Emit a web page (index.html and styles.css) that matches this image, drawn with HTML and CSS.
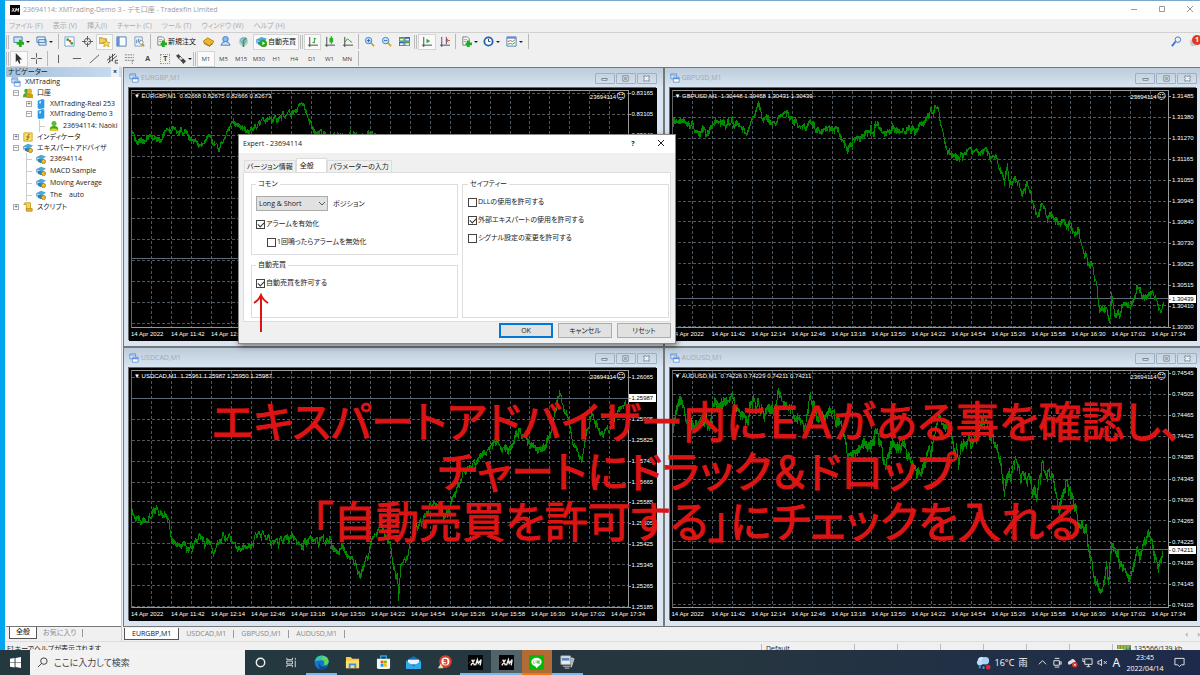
FILE: index.html
```html
<!DOCTYPE html>
<html lang="ja">
<head>
  <meta charset="UTF-8">
  <title>23694114: XMTrading-Demo 3 - デモ口座</title>
  <link rel="stylesheet" href="styles.css">
</head>
<body>

  <svg class="defs" aria-hidden="true">
    <symbol id="i-windows" viewBox="0 0 12 12"><path d="M1 1h7v6H1z" fill="#dcebfb" stroke="#5a93d8"/><path d="M1 2.500h7" stroke="#5a93d8"/><path d="M4 5h7v6H4z" fill="#fff" stroke="#5a93d8"/><path d="M4 6.500h7" stroke="#5a93d8" stroke-width="2"/></symbol>
    <symbol id="i-server" viewBox="0 0 12 12"><path d="M2 2l6-2 2 1v10l-6 1-2-1z" fill="#2a9be8"/><path d="M4 3l2-1v3L4 5.500z" fill="#d6efff"/></symbol>
    <symbol id="i-accounts" viewBox="0 0 12 12"><circle cx="4" cy="3.500" r="2.500" fill="#3fae2a"/><path d="M0 11q0-5 4-5t4 5z" fill="#3fae2a"/><circle cx="8" cy="3.500" r="3" fill="#e2b52c"/><path d="M4 12V8q1-2 4-2t4 2v4z" fill="#d19a17"/></symbol>
    <symbol id="i-user" viewBox="0 0 12 12"><circle cx="6" cy="3" r="3" fill="#5cbc2c"/><path d="M1 10q0-4 5-4t5 4v1H1z" fill="#3aa51e"/><path d="M1 12q0-3 3-3h3q4 0 4 3z" fill="#f2c832"/></symbol>
    <symbol id="i-indi" viewBox="0 0 12 12"><path d="M1 1h10v10H1z" fill="#f7df68" stroke="#c9a020"/><path d="M8 3q-2-1-2 2v3q0 2-2 1M4 6h4" fill="none" stroke="#7c5d08"/></symbol>
    <symbol id="i-hat" viewBox="0 0 12 12"><path d="M2 6v3l4 2 3-2V6z" fill="#2c7fae"/><path d="M0 4l6-3 6 2-5 4z" fill="#49a9d8"/><path d="M1 4v4" stroke="#23719d"/><circle cx="9" cy="9" r="2.500" fill="#edbd2c" stroke="#a77c10"/></symbol>
    <symbol id="i-script" viewBox="0 0 12 12"><path d="M2 1h7v8H4V3H1z" fill="#f6d65b" stroke="#c4961a"/><path d="M4 8h7v3H4z" fill="#e9b92d" stroke="#b88912"/></symbol>
    <symbol id="i-sheetplus" viewBox="0 0 12 12"><path d="M2 1h5l2 2v7H2z" fill="#fff" stroke="#777"/><path d="M3 4h4M3 6h3" stroke="#999"/><path d="M8 5v7M5 8.500h7" stroke="#1fae1f" stroke-width="3"/></symbol>
    <symbol id="i-xm" viewBox="0 0 16 16"><path d="M0 0h16v16H0z" fill="#050505"/><path d="M3 11l4-6M4 5l3 6M8 11l2-6 1 4 3-4-1 6" fill="none" stroke="#eee" stroke-width="1.500"/><path d="M1 9l2-2" stroke="#d22"/></symbol>
  </svg>

  <div class="app">
    <header class="titlebar">
      <svg class="app-icon"><use href="#i-xm"/></svg>
      <span class="title">23694114: XMTrading-Demo 3 - デモ口座 - Tradexfin Limited</span>
      <div class="caption">
        <button aria-label="最小化"><svg viewBox="0 0 8 8"><path d="M1 4.500h6"/></svg></button>
        <button aria-label="最大化"><svg viewBox="0 0 8 8"><path d="M1.500 1.500h5v5h-5z"/></svg></button>
        <button aria-label="閉じる"><svg viewBox="0 0 8 8"><path d="M1 1l6 6M7 1L1 7"/></svg></button>
      </div>
    </header>

    <nav class="menu">
      <button>ファイル (F)</button><button>表示 (V)</button><button>挿入(I)</button><button>チャート (C)</button><button>ツール (T)</button><button>ウィンドウ (W)</button><button>ヘルプ (H)</button>
    </nav>

    <div class="toolbars">
      <div class="toolbar">
        <i class="grip"></i>
        <div class="group w-new">
          <button class="drop" aria-label="新規チャート"><svg viewBox="0 0 12 12"><path d="M1 1h9v6H1z" fill="#cfe3f8" stroke="#4779b5"/><path d="M8 4v8M4 8h8" stroke="#1fae1f" stroke-width="3"/></svg></button>
          <button class="drop" aria-label="定型"><svg viewBox="0 0 12 12"><path d="M1 1h9v6H1zM3 4h8v6H3z" fill="#e4effb" stroke="#4779b5"/></svg></button>
        </div>
        <i class="sep"></i>
        <div class="group w-5">
          <button aria-label="気配値"><svg viewBox="0 0 12 12"><path d="M1 1h10v10H1z" fill="#fff" stroke="#6f9fd0"/><circle cx="4" cy="4" r="1.500" fill="#2a2"/><circle cx="6.500" cy="5.500" r="1.500" fill="#e44"/><circle cx="8.500" cy="8" r="1.500" fill="#2a2"/></svg></button>
          <button aria-label="データ"><svg viewBox="0 0 12 12" fill="none" stroke="#555"><circle cx="6" cy="6" r="3.500"/><path d="M6 0v5M6 7v5M0 6h5M7 6h5"/></svg></button>
          <button class="on" aria-label="ナビゲーター"><svg viewBox="0 0 12 12"><path d="M0 2h4l1 1h3v5H0z" fill="#f3cf60" stroke="#b8912a"/><path d="M8 4l1 3h3l-2 2 1 3-3-2-3 2 1-3-2-2h3z" fill="#ffe24d" stroke="#b98d10" stroke-width=".7"/></svg></button>
          <button aria-label="ターミナル"><svg viewBox="0 0 12 12"><path d="M1 1h10v10H1z" fill="#fff" stroke="#4779b5"/><path d="M1 1h3v10H1z" fill="#5b94d8"/></svg></button>
          <button aria-label="テスター"><svg viewBox="0 0 12 12"><path d="M1 1h8v10H1z" fill="#eef4fb" stroke="#7a9cc0"/><path d="M3 4v4M5 3v4M7 4v4" stroke="#4779b5"/><circle cx="8" cy="7" r="2" fill="#fff" stroke="#888"/><path d="M9 9l2 2" stroke="#c90" stroke-width="2"/></svg></button>
        </div>
        <i class="sep"></i>
        <button class="text-btn"><svg><use href="#i-sheetplus"/></svg>新規注文</button>
        <div class="group w-3">
          <button aria-label="メタエディター"><svg viewBox="0 0 12 12"><path d="M0 6l5-4 7 4-5 5z" fill="#f0b62b" stroke="#b77d0b"/><path d="M1 8l6 3 4-3" fill="none" stroke="#8f6208"/></svg></button>
          <button aria-label="コミュニティ"><svg viewBox="0 0 12 12"><circle cx="6" cy="3.500" r="3" fill="#8bbcf0" stroke="#4179c2"/><path d="M1 10q1-4 5-4t5 4z" fill="#cfe3fa" stroke="#4179c2"/></svg></button>
          <button aria-label="シグナル"><svg viewBox="0 0 12 12"><circle cx="6" cy="6" r="5" fill="#b9d0dd"/><path d="M6 12V5l3-3" stroke="#35a83a" stroke-width="2" fill="none"/><circle cx="6" cy="5" r="3" fill="none" stroke="#5b98c0"/></svg></button>
        </div>
        <button class="text-btn on"><svg viewBox="0 0 12 12"><use href="#i-hat"/><circle cx="8" cy="8" r="4" fill="#26a526"/><path d="M7 6v4l3-2z" fill="#fff"/></svg>自動売買</button>
        <i class="grip"></i>
        <div class="group w-3">
          <button class="on" aria-label="バーチャート"><svg viewBox="0 0 12 12" fill="none"><path d="M3 1v11M1 10h11" stroke="#444"/><path d="M8 2v6M8 3h2M6 7h2" stroke="#1a9e1a"/></svg></button>
          <button aria-label="ローソク足"><svg viewBox="0 0 12 12"><path d="M3 1v11M1 10h11" stroke="#444"/><path d="M8 0v9" stroke="#1a9e1a"/><path d="M6 2h4v5H6z" fill="#1fb81f"/></svg></button>
          <button aria-label="ライン"><svg viewBox="0 0 12 12" fill="none"><path d="M3 1v11M1 10h11" stroke="#444"/><path d="M3 7q3-6 5-2l3 2" stroke="#1a9e1a"/></svg></button>
        </div>
        <i class="sep"></i>
        <div class="group w-3">
          <button aria-label="拡大"><svg viewBox="0 0 12 12"><path d="M7 7l4 4" stroke="#d8a521" stroke-width="2"/><circle cx="5" cy="5" r="3.500" fill="#cfe6fb" stroke="#3a7cc9"/><path d="M3 5h4M5 3v4" stroke="#2466b0"/></svg></button>
          <button aria-label="縮小"><svg viewBox="0 0 12 12"><path d="M7 7l4 4" stroke="#d8a521" stroke-width="2"/><circle cx="5" cy="5" r="3.500" fill="#cfe6fb" stroke="#3a7cc9"/><path d="M3 5h4" stroke="#2466b0"/></svg></button>
          <button aria-label="整列"><svg viewBox="0 0 12 12"><path d="M0 1h6v5H0zM6 6h6v5H6z" fill="#4aa32a"/><path d="M6 1h6v5H6zM0 6h6v5H0z" fill="#3066bd"/><path d="M1 3h4v2H1zM7 3h4v2H7zM1 8h4v2H1zM7 8h4v2H7z" fill="#e8f2fb"/></svg></button>
        </div>
        <i class="grip"></i>
        <div class="group w-2">
          <button class="on" aria-label="自動スクロール"><svg viewBox="0 0 12 12"><path d="M3 1v11M1 10h11" stroke="#444"/><path d="M6 3v5l4-2.500z" fill="#1fae1f"/></svg></button>
          <button aria-label="シフト"><svg viewBox="0 0 12 12"><path d="M3 1v11M1 10h11M8 1v8" stroke="#446"/><path d="M12 5H9M10 3L8 5l2 2" stroke="#d23c1c" fill="none"/></svg></button>
        </div>
        <i class="sep"></i>
        <div class="group w-drop3">
          <button class="drop" aria-label="インディケータ"><svg><use href="#i-sheetplus"/></svg></button>
          <button class="drop" aria-label="時間足"><svg viewBox="0 0 12 12"><circle cx="6" cy="6" r="4.500" fill="#fff" stroke="#2264b4" stroke-width="2"/><path d="M6 3v3h2" stroke="#335" fill="none"/></svg></button>
          <button class="drop" aria-label="テンプレート"><svg viewBox="0 0 12 12"><path d="M1 1h10v10H1z" fill="#fff" stroke="#4779b5"/><path d="M1 2h10" stroke="#5b94d8" stroke-width="2"/><path d="M2 6l3-1 2 1 3-2" stroke="#d44" fill="none"/><path d="M2 9l3-1 2 1 3-2" stroke="#2a2" fill="none"/></svg></button>
        </div>
        <i class="sep"></i>
        <div class="notices">
          <button aria-label="検索"><svg viewBox="0 0 12 12" fill="none" stroke="#3b6fd0"><circle cx="7.500" cy="4" r="3"/><path d="M5 6l-4 5" stroke-width="2"/></svg></button>
          <button aria-label="通知"><svg viewBox="0 0 12 12"><circle cx="5" cy="7" r="4" fill="#ccc"/><path d="M4 9v3l3-3z" fill="#ccc"/></svg><b>1</b></button>
        </div>
      </div>

      <div class="toolbar">
        <i class="grip"></i>
        <div class="group w-2">
          <button class="on" aria-label="カーソル"><svg viewBox="0 0 12 12"><path d="M3 0v10l2-2 2 4 1-1-1-4h3z" fill="#333"/></svg></button>
          <button aria-label="クロスヘア"><svg viewBox="0 0 12 12" stroke="#555"><path d="M6 0v5M6 7v5M0 6h5M7 6h5"/></svg></button>
        </div>
        <i class="sep"></i>
        <div class="group w-8">
          <button aria-label="垂直線"><svg viewBox="0 0 12 12" stroke="#555"><path d="M6 2v9"/></svg></button>
          <button aria-label="水平線"><svg viewBox="0 0 12 12" stroke="#555"><path d="M2 6h9"/></svg></button>
          <button aria-label="トレンド"><svg viewBox="0 0 12 12" stroke="#555"><path d="M1 11L11 2"/></svg></button>
          <button aria-label="チャネル"><svg viewBox="0 0 12 12" stroke="#444"><path d="M0 8l9-7M1 11l10-8M3 3v7M6 1v8M9 8h3M9 11h3M9 8v3"/></svg></button>
          <button aria-label="フィボ"><svg viewBox="0 0 12 12" stroke="#777"><path d="M1 2h10M1 5h10M1 8h7M9 8h3M9 8v4" stroke-dasharray="2 1"/></svg></button>
          <button class="letter">A</button>
          <button class="letter boxed">T</button>
          <button class="drop" aria-label="矢印"><svg viewBox="0 0 12 12"><path d="M1 3l3-2 2 3-2 2zM6 8l3-2 3 3-3 3z" fill="#444"/><path d="M3 5l6 5M5 3l3 3" stroke="#444"/></svg></button>
        </div>
        <i class="grip"></i>
        <div class="group w-9">
          <button class="on">M1</button><button>M5</button><button>M15</button><button>M30</button><button>H1</button><button>H4</button><button>D1</button><button>W1</button><button>MN</button>
        </div>
        <i class="sep"></i>
      </div>
    </div>

    <main class="workspace">
      <aside class="navigator">
        <div class="nav-head">ナビゲーター<button aria-label="閉じる">×</button></div>
        <ul class="tree">
          <li><svg><use href="#i-windows"/></svg>XMTrading</li>
          <li class="l1"><i class="box">−</i><svg><use href="#i-accounts"/></svg>口座</li>
          <li class="l2"><i class="box">+</i><svg><use href="#i-server"/></svg>XMTrading-Real 253</li>
          <li class="l2"><i class="box">−</i><svg><use href="#i-server"/></svg>XMTrading-Demo 3</li>
          <li class="l3"><i class="twig"></i><svg><use href="#i-user"/></svg>23694114: Naoki</li>
          <li class="l1"><i class="box">+</i><svg><use href="#i-indi"/></svg>インディケータ</li>
          <li class="l1"><i class="box">−</i><svg><use href="#i-hat"/></svg>エキスパートアドバイザ</li>
          <li class="l2"><i class="twig"></i><svg><use href="#i-hat"/></svg>23694114</li>
          <li class="l2"><i class="twig"></i><svg><use href="#i-hat"/></svg>MACD Sample</li>
          <li class="l2"><i class="twig"></i><svg><use href="#i-hat"/></svg>Moving Average</li>
          <li class="l2"><i class="twig"></i><svg><use href="#i-hat"/></svg>The　auto</li>
          <li class="l1"><i class="box">+</i><svg><use href="#i-script"/></svg>スクリプト</li>
        </ul>
        <div class="nav-tabs"><button class="active">全般</button><button>お気に入り</button></div>
      </aside>

      <section class="mdi">
        <div class="charts" id="charts"></div>
        <div class="chart-tabs">
          <button class="active">EURGBP,M1</button><button>USDCAD,M1</button><button>GBPUSD,M1</button><button>AUDUSD,M1</button>
          <span class="arrows"><i>‹</i><i>›</i></span>
        </div>
      </section>
    </main>

    <footer class="status">
      <span class="help">F1キーでヘルプが表示されます</span>
      <span class="profile">Default</span>
      <span></span><span></span><span></span><span></span><span></span><span></span>
      <span class="traffic"><svg viewBox="0 0 14 8"><path d="M0 1h14v4H0z" fill="#7f9a25"/><path d="M0 8l14-5v5z" fill="#2b7d96"/><path d="M2 0v8M5 0v8M8 0v8M11 0v8" stroke="#dfe8c8" stroke-width=".6"/></svg>135566/139 kb</span>
    </footer>
  </div>

  <form class="dialog" onsubmit="return false">
    <div class="dialog-title">Expert - 23694114
      <button type="button">?</button>
      <button type="button" aria-label="閉じる"><svg viewBox="0 0 8 8"><path d="M1 1l6 6M7 1L1 7" stroke="#222" fill="none"/></svg></button>
    </div>
    <div class="dialog-tabs"><button type="button">バージョン情報</button><button type="button" class="active">全般</button><button type="button">パラメーターの入力</button></div>
    <div class="page">
      <div class="column">
        <fieldset class="common">
          <legend>コモン</legend>
          <div class="line">
            <select id="position"><option>Long &amp; Short</option></select>
            <label for="position">ポジション</label>
          </div>
          <label><input type="checkbox" checked>アラームを有効化</label>
          <label class="sub"><input type="checkbox">1回鳴ったらアラームを無効化</label>
        </fieldset>
        <fieldset class="auto">
          <legend>自動売買</legend>
          <label><input type="checkbox" checked>自動売買を許可する</label>
        </fieldset>
      </div>
      <div class="column">
        <fieldset class="safety">
          <legend>セイフティー</legend>
          <label><input type="checkbox">DLLの使用を許可する</label>
          <label><input type="checkbox" checked>外部エキスパートの使用を許可する</label>
          <label><input type="checkbox">シグナル設定の変更を許可する</label>
        </fieldset>
      </div>
    </div>
    <div class="actions">
      <button class="primary">OK</button><button type="button">キャンセル</button><button type="reset">リセット</button>
    </div>
    <svg class="arrow" viewBox="0 0 16 40"><path d="M8 39V2M1 10q5-3 7-8 2 5 7 8" fill="none" stroke="#dc1414" stroke-width="2"/></svg>
  </form>

  <p class="telop">エキスパートアドバイザー内にＥＡがある事を確認し、<br>チャートにドラック＆ドロップ<br>「自動売買を許可する」にチェックを入れる</p>

  <div class="taskbar">
    <button class="start" aria-label="スタート"><svg viewBox="0 0 12 12" fill="#fff"><path d="M0 2l5-1v5H0zM6 1l6-1v6H6zM0 6.500h5v5l-5-1zM6 6.500h6v5.500l-6-1z"/></svg></button>
    <label class="search"><svg viewBox="0 0 12 12" fill="none" stroke="#333"><circle cx="7.500" cy="4.500" r="3.500"/><path d="M5 7l-4 4"/></svg><input type="text" placeholder="ここに入力して検索"></label>
    <div class="apps">
      <button aria-label="Cortana"><svg viewBox="0 0 16 16"><circle cx="8" cy="8" r="4.500" fill="none" stroke="#eee" stroke-width="1.500"/></svg></button>
      <button aria-label="タスクビュー"><svg viewBox="0 0 16 16" fill="none" stroke="#ddd"><path d="M3 3v2h6V3M3 13v-2h6v2M3 6.500h6v3H3zM12 3v2M12 6v7"/></svg></button>
      <button class="open" aria-label="Edge"><svg viewBox="0 0 16 16"><circle cx="8" cy="8" r="7.500" fill="#1673c8"/><path d="M1 7q1-7 8-6.500 7 1 6.500 7-1 4-5 3 2-5-3-5-3 0-6.500 1.500z" fill="#35c3b0"/><path d="M9 1q7 1 6.500 7-1 3-5 2.500 2-5-2-6z" fill="#5fd35b"/><path d="M6 8q0 6 8 4-3 4-7 3Q4 13 6 8z" fill="#0c4b94"/></svg></button>
      <button aria-label="エクスプローラー"><svg viewBox="0 0 16 16"><path d="M1 2h5l2 2h7v10H1z" fill="#f7c945"/><path d="M1 6h14v8H1z" fill="#ffdc73"/><path d="M4 14V9h8v5h-2v-3H6v3z" fill="#3a8edb"/></svg></button>
      <button aria-label="ストア"><svg viewBox="0 0 16 16"><path d="M5 4V1h6v3" fill="none" stroke="#29a3dd" stroke-width="1.500"/><path d="M1 4h14v9q0 2-2 2H3q-2 0-2-2z" fill="#f4f4f4"/><path d="M5 6h3v3H5z" fill="#f25022"/><path d="M8.500 6h3v3h-3z" fill="#7fba00"/><path d="M5 9.500h3v3H5z" fill="#00a4ef"/><path d="M8.500 9.500h3v3h-3z" fill="#ffb900"/></svg></button>
      <button aria-label="メール"><svg viewBox="0 0 16 16"><path d="M0 6l8-5 8 5v9H0z" fill="#0f6cbd"/><path d="M2 5h12v5H2z" fill="#e9f4fd"/><path d="M0 6l8 6 8-6v9H0z" fill="#2fa8ec"/></svg></button>
      <button aria-label="ブラウザー"><svg viewBox="0 0 16 16"><circle cx="9" cy="7" r="5.500" fill="#fff" stroke="#d8402c" stroke-width="2.500"/><path d="M7 5h3q1 1 0 2 1 1 0 2.500H7M7 7h3" fill="none" stroke="#d8402c" stroke-width="1.500"/><path d="M1 14l3-5 3 5z" fill="#eed9a0"/></svg></button>
      <button class="open" aria-label="XM MT4"><svg><use href="#i-xm"/></svg></button>
      <button class="open current" aria-label="XM MT4"><svg><use href="#i-xm"/></svg></button>
      <button class="open alert" aria-label="LINE"><svg viewBox="0 0 16 16"><rect width="16" height="16" rx="2" fill="#06b806"/><ellipse cx="8" cy="7.500" rx="5.500" ry="4.500" fill="#fff"/><path d="M6 11h5l-3 3z" fill="#fff"/><path d="M5 6v3h1M7.500 6v3M9 9V6l1 3V6M12 6h-1v3h1" stroke="#06b806" stroke-width=".6" fill="none"/></svg></button>
      <button class="open" aria-label="フォト"><svg viewBox="0 0 16 16"><path d="M1 1h10v9H1z" fill="#e8eef4" stroke="#aaa"/><path d="M2 3h8v3H2z" fill="#5b86c4"/><path d="M3 12h8M5 14h5M12 3l3 1-3 9z" stroke="#ccc" fill="#9aa"/></svg></button>
    </div>
    <div class="tray">
      <svg class="weather" viewBox="0 0 16 16"><circle cx="6" cy="6" r="4" fill="#dcecfb"/><circle cx="10" cy="6" r="4" fill="#a9d2f5"/><circle cx="4" cy="8" r="3" fill="#b9dcf8"/><path d="M4 11v3M8 12v3" stroke="#3b9bea" stroke-width="2"/><circle cx="13" cy="13" r="2.500" fill="#e0203a"/></svg>
      <span>16°C</span><span>雨</span>
      <svg class="first" viewBox="0 0 12 12"><path d="M2 8l4-4 4 4"/></svg>
      <svg viewBox="0 0 12 12"><path d="M2 4h6v5H2zM8 6l2-1v3l-2-1M3 1.500h5M3 11h5"/></svg>
      <svg viewBox="0 0 12 12"><path d="M2 8q-2-3 2-4 3-3 5 1z" fill="#ddd"/><circle cx="8.500" cy="8.500" r="3" fill="#e03030" stroke="none"/><path d="M7.500 7.500l2 2M9.500 7.500l-2 2"/></svg>
      <svg viewBox="0 0 12 12"><path d="M3 2h8v6H3zM5 10.500h4M7 8v2M1 1v4h2"/></svg>
      <svg viewBox="0 0 12 12"><path d="M1 4.500h2l2-2v7l-2-2H1zM7.500 4.500l3 3M10.500 4.500l-3 3"/></svg>
      <span class="ime">A</span>
      <time>23:45<br>2022/04/14</time>
      <svg class="action" viewBox="0 0 12 12"><path d="M1 1.500h10v7H8l-2 2-2-2H1z"/></svg>
    </div>
  </div>

  <script src="charts.js"></script>
</body>
</html>
```

FILE: styles.css
```css
* {
  box-sizing: border-box;
}

body {
  margin: 0;
  min-height: 100vh;
  display: flex;
  flex-direction: column;
  position: relative;
  overflow: hidden;
  background: #f0f0f0;
  color: #222;
  font-family: "Open Sans", "Noto Sans CJK JP", sans-serif;
  font-size: 7px;
  line-height: 10px;
  font-feature-settings: "palt";
}

button, input, select {
  font: inherit;
  font-feature-settings: inherit;
  color: inherit;
  margin: 0;
  padding: 0;
  border: 0;
  background: none;
}

.defs {
  position: absolute;
  width: 0;
  height: 0;
}

.app {
  flex: 1;
  display: flex;
  flex-direction: column;
  border-left: 5px solid #00a4ef;
}

/* title and menu */
.titlebar {
  display: flex;
  align-items: center;
  height: 19px;
  padding-left: 5px;
  gap: 3px;
  background: #fff;
  border-top: 1px solid #7ba7cf;
  color: #999;
}

.app-icon {
  width: 10px;
  height: 10px;
}

.caption {
  display: flex;
  margin-left: auto;
  margin-right: -4px;
}

.caption button {
  width: 28px;
  height: 17px;
}

.caption svg {
  width: 8px;
  height: 8px;
  fill: none;
  stroke: #999;
}

.menu {
  display: flex;
  align-items: center;
  gap: 10px;
  height: 14px;
  padding-left: 4px;
  color: #aaa;
  border-bottom: 1px solid #d0d0d0;
}

/* toolbars */
.toolbar {
  display: flex;
  align-items: center;
  height: 17px;
  gap: 1px;
  padding-left: 1px;
  color: #444;
}

.toolbar svg {
  width: 11px;
  height: 11px;
  flex: none;
}

.toolbar button {
  display: flex;
  align-items: center;
  justify-content: center;
  height: 16px;
}

.grip {
  width: 3px;
  height: 14px;
  border-left: 1px solid #bbb;
  border-right: 1px solid #bbb;
}

.sep {
  width: 1px;
  height: 15px;
  margin: 0 1px;
  background: #b8b8b8;
}

.group {
  display: grid;
  grid-auto-flow: column;
  grid-auto-columns: 1fr;
}

.w-new { width: 46px; }
.w-2 { width: 35px; }
.w-3 { width: 52px; }
.w-5 { width: 87px; }
.w-8 { width: 142px; }
.w-9 { width: 159px; font-size: 6px; }
.w-drop3 { width: 68px; }

.on {
  background: #fafafa;
  border: 1px solid #d4d4d4;
}

.drop::after {
  content: "";
  margin-left: 2px;
  border: 2px solid transparent;
  border-top: 2px solid #222;
  border-bottom: 0;
}

.text-btn {
  width: 46px;
  gap: 1px;
  color: #111;
  white-space: nowrap;
}

.letter {
  font-weight: bold;
}

.boxed {
  border: 1px dotted #999;
  width: 10px;
  margin: 0 auto;
}

.toolbar .boxed {
  height: 10px;
  align-self: center;
}

.notices {
  display: flex;
  gap: 6px;
  margin-left: auto;
}

.notices button {
  position: relative;
  width: 12px;
}

.notices b {
  position: absolute;
  left: 4px;
  top: 1px;
  width: 10px;
  border-radius: 5px;
  background: #e03a1e;
  color: #fff;
  text-align: center;
}

/* navigator */
.workspace {
  flex: 1;
  display: flex;
  min-height: 0;
}

.navigator {
  display: flex;
  flex-direction: column;
  width: 116px;
  margin-left: 1px;
  border-right: 1px solid #ccc;
  background: #fff;
}

.nav-head {
  display: flex;
  justify-content: space-between;
  padding: 0 2px;
  height: 10px;
  background: linear-gradient(90deg, #a5c0dc, #c9dcf0);
}

.nav-head button {
  width: 8px;
  background: #f0f0f0;
  font-weight: bold;
}

.tree {
  display: grid;
  grid-auto-rows: 1fr;
  height: 135px;
  margin: 0;
  padding: 0 0 0 5px;
  list-style: none;
  overflow: hidden;
}

.tree li {
  display: flex;
  align-items: center;
  gap: 4px;
  white-space: nowrap;
}

.tree svg {
  width: 10px;
  height: 10px;
  flex: none;
}

.tree .l1 { padding-left: 2px; }
.tree .l2 { padding-left: 15px; }
.tree .l3 { padding-left: 28px; }

.box {
  width: 6px;
  height: 6px;
  border: 1px solid #aaa;
  color: #446;
  font-style: normal;
  line-height: 4px;
  text-align: center;
}

.twig {
  width: 6px;
  height: 12px;
  border-left: 1px solid #ccc;
  background: linear-gradient(#ccc, #ccc) 0 6px / 6px 1px no-repeat;
}

.nav-tabs, .chart-tabs {
  display: flex;
  align-items: center;
  background: #f0f0f0;
  color: #888;
}

.nav-tabs {
  height: 15px;
  margin-top: auto;
  padding: 0 0 3px 3px;
  border-top: 1px solid #777;
}

.nav-tabs button, .chart-tabs button {
  height: 8px;
  line-height: 8px;
  padding: 0 7px;
  border-right: 1px solid #999;
}

.nav-tabs button {
  padding: 0 6px;
}

.nav-tabs .active, .chart-tabs .active {
  height: 12px;
  background: #fff;
  color: #111;
  border: 1px solid #555;
  border-top: 0;
}

/* chart windows */
.mdi {
  flex: 1;
  min-width: 0;
  margin-left: 1px;
  display: flex;
  flex-direction: column;
  overflow: hidden;
}

.charts {
  flex: 1;
  display: grid;
  grid-template-columns: 1fr 1fr;
  grid-template-rows: 1fr 1fr;
  margin-right: -4px;
}

.chart-window {
  display: flex;
  flex-direction: column;
  padding: 0 6px 5px 5px;
  border: 1px solid #777;
  background: linear-gradient(#bdccda, #d9e5f2 20px);
  min-height: 0;
}

.chart-title {
  display: flex;
  align-items: center;
  height: 20px;
  gap: 2px;
  color: #a0a8b0;
}

.chart-title > svg {
  width: 10px;
  height: 10px;
}

.chart-buttons {
  display: flex;
  gap: 1px;
  margin-left: auto;
}

.chart-buttons button {
  display: flex;
  align-items: center;
  justify-content: center;
  width: 20px;
  height: 11px;
  border: 1px solid #9fb0c2;
  border-radius: 1px;
}

.chart-buttons svg {
  width: 7px;
  height: 7px;
  fill: #f4f8fc;
  stroke: #6b7885;
}

.chart {
  flex: 1;
  display: grid;
  grid-template-columns: 1fr 28px;
  grid-template-rows: 1fr 13px;
  padding: 2px 0 0 2px;
  background: #000;
  color: #fff;
  font-family: "Liberation Sans", sans-serif;
  font-size: 6px;
  line-height: 8px;
  box-shadow: -1px -1px 0 #666;
}

.plot {
  position: relative;
  border: 1px solid #999;
  border-left-color: #666;
}

.plot svg {
  position: absolute;
  width: 100%;
  height: 100%;
}

.plot path, .plot line {
  fill: none;
  vector-effect: non-scaling-stroke;
}

.grid { stroke: #4d5860; stroke-dasharray: 3 2; }
.bid { stroke: #5d6b78; }
.bars { stroke: #008a00; }

.quote {
  position: relative;
  display: flex;
  justify-content: space-between;
  padding: 1px 2px;
}

.quote i {
  font: 9px/8px "DejaVu Sans", sans-serif;
}

.prices {
  position: relative;
}

.prices span {
  position: absolute;
  left: 0;
  padding-left: 3px;
  transform: translateY(-50%);
}

.prices span::before {
  content: "";
  position: absolute;
  left: 0;
  top: 4px;
  width: 2px;
  border-top: 1px solid #999;
}

.prices .now {
  width: 27px;
  background: #fff;
  color: #000;
}

.times {
  grid-column: 1 / 3;
  display: flex;
  white-space: nowrap;
  padding-top: 2px;
}

.times span {
  flex: 0 0 40px;
}

.chart-tabs {
  height: 14px;
  padding-left: 1px;
}

.arrows {
  display: flex;
  gap: 9px;
  margin-left: auto;
  font-size: 9px;
}

.arrows i {
  font-style: normal;
}

/* status line, half hidden by the taskbar */
.status {
  display: flex;
  height: 9px;
  overflow: hidden;
  padding: 2px 0 0 2px;
  border-top: 1px solid #ddd;
  white-space: nowrap;
}

.status span {
  width: 43px;
  padding-left: 4px;
  border-left: 1px solid #bbb;
}

.status .help {
  flex: 1;
  padding: 0;
  border: 0;
}

.status .profile { width: 93px; }

.status .traffic {
  display: flex;
  gap: 3px;
  width: 88px;
}

.traffic svg {
  width: 14px;
  height: 8px;
}

/* expert dialog */
.dialog {
  position: absolute;
  left: 238px;
  top: 134px;
  width: 438px;
  padding-bottom: 5px;
  background: #f0f0f0;
  border: 1px solid #888;
  box-shadow: 1px 2px 6px rgba(0, 0, 0, 0.5);
}

.dialog-title {
  display: flex;
  align-items: center;
  height: 18px;
  padding-left: 4px;
  background: #fff;
}

.dialog-title button {
  width: 28px;
  font-weight: bold;
}

.dialog-title button:first-of-type {
  margin-left: auto;
}

.dialog-title svg {
  width: 8px;
  height: 8px;
}

.dialog-tabs {
  display: flex;
  align-items: flex-end;
  height: 19px;
  padding-left: 5px;
}

.dialog-tabs button {
  height: 12px;
  padding: 0 2px;
  border: 1px solid #ddd;
  border-bottom: 0;
}

.dialog-tabs .active {
  height: 14px;
  width: 31px;
  padding: 0 12px 0 3px;
  background: #fff;
  white-space: nowrap;
}

.page {
  display: flex;
  gap: 4px;
  height: 150px;
  margin: 0 4px;
  padding: 6px 1px 3px 7px;
  background: #fff;
  border: 1px solid #ddd;
}

.column {
  flex: 1;
  display: flex;
  flex-direction: column;
  gap: 5px;
}

fieldset {
  display: flex;
  flex-direction: column;
  gap: 8px;
  min-width: 0;
  margin: 0;
  padding: 4px;
  border: 1px solid #ddd;
}

legend {
  padding: 0 2px;
}

.common { height: 76px; }
.auto { flex: 1; padding-top: 8px; }
.safety { flex: 1; padding: 8px 5px; }

.line {
  display: flex;
  align-items: center;
  gap: 5px;
  margin-top: 3px;
}

fieldset label {
  display: flex;
  align-items: center;
  gap: 1px;
}

.sub { margin-left: 11px; }

select {
  width: 72px;
  height: 15px;
  padding-left: 2px;
  appearance: none;
  border: 1px solid #aaa;
  background: #e1e1e1;
  background-image: linear-gradient(45deg, transparent 40%, #555 40%, #555 60%, transparent 60%), linear-gradient(-45deg, transparent 40%, #555 40%, #555 60%, transparent 60%);
  background-size: 3px 3px;
  background-position: 62px 5px, 65px 5px;
  background-repeat: no-repeat;
}

input[type="checkbox"] {
  appearance: none;
  position: relative;
  width: 9px;
  height: 9px;
  border: 1px solid #444;
  background: #fff;
}

input[type="checkbox"]:checked::after {
  content: "";
  position: absolute;
  left: 1px;
  top: 1px;
  width: 5px;
  height: 3px;
  border: solid #333;
  border-width: 0 0 1px 1px;
  transform: rotate(-45deg);
}

.actions {
  display: flex;
  justify-content: flex-end;
  gap: 5px;
  padding: 1px 4px 0;
}

.actions button {
  width: 54px;
  height: 15px;
  border: 1px solid #adadad;
  background: #e1e1e1;
}

.actions .primary {
  border: 2px solid #0078d7;
}

.arrow {
  position: absolute;
  left: 14px;
  top: 158px;
  width: 16px;
  height: 40px;
}

/* caption over the screen */
.telop {
  position: absolute;
  left: 0;
  right: 0;
  top: 394px;
  margin: 0;
  padding-left: 194px;
  color: #dc1414;
  font-family: "Noto Sans CJK JP", sans-serif;
  font-size: 43px;
  font-weight: 400;
  line-height: 50px;
  text-align: center;
  white-space: nowrap;
  -webkit-text-stroke: 1px #dc1414;
}

/* taskbar */
.taskbar {
  display: flex;
  height: 25px;
  background: linear-gradient(90deg, #24393f, #26363f 60%, #1d2a4a);
  color: #fff;
}

.start {
  width: 30px;
}

.start svg {
  width: 11px;
  height: 11px;
  display: block;
  margin: auto;
}

.search {
  display: flex;
  align-items: center;
  gap: 6px;
  width: 215px;
  padding-left: 7px;
  background: #f2f2f2;
}

.search svg {
  width: 11px;
  height: 11px;
}

.search input {
  flex: 1;
  min-width: 0;
  font-size: 9px;
}

.search input::placeholder {
  color: #444;
}

.apps {
  display: grid;
  grid-template-columns: repeat(11, 1fr);
  width: 338px;
}

.apps button {
  display: flex;
  align-items: center;
  justify-content: center;
}

.apps svg {
  width: 15px;
  height: 15px;
}

.open {
  box-shadow: inset 0 -2px #76b9ed;
}

.current { background: #53636a; }

.alert {
  background: #b06c34;
  box-shadow: inset 0 -2px #f07818;
}

.tray {
  display: flex;
  align-items: center;
  gap: 4px;
  margin-left: auto;
  padding-right: 15px;
  font-size: 9px;
  white-space: nowrap;
}

.tray svg {
  width: 11px;
  height: 11px;
  fill: none;
  stroke: #eee;
}

.tray .weather {
  width: 15px;
  height: 15px;
  stroke: none;
}

.tray .first { margin-left: 6px; }

.tray .ime { font-size: 12px; }

time {
  width: 42px;
  font-size: 7px;
  line-height: 11px;
  text-align: center;
}

.tray .action {
  margin-left: 4px;
}
```

FILE: charts.js
```js
const W = 498;
const H = 238;

const times = ['2022', '11:42', '12:14', '12:46', '13:18', '13:50', '14:22', '14:54', '15:26', '15:58', '16:30', '17:02', '17:34'];

const charts = [
  {
    symbol: 'EURGBP', quote: '0.82668 0.82675 0.82666 0.82673',
    prices: ['0.83165', '0.83105', '0.83040', '0.82980', '0.82915', '0.82855', '0.82795', '0.82730', '0.82670', '0.82605', '0.82545', '0.82480'],
    first: 3, step: 21, bid: 169, now: '0.82673', noise: 4,
    points: [0,40,7,52,16,47,29,47,39,38,56,43,69,53,79,45,87,58,102,30,116,40,126,35,134,28,146,26,159,22,166,18,172,12,176,26,184,40,200,46,215,44,244,44,270,60,320,90,380,120,430,150,494,169]
  },
  {
    symbol: 'GBPUSD', quote: '1.30448 1.30458 1.30431 1.30439',
    prices: ['1.31485', '1.31380', '1.31270', '1.31165', '1.31055', '1.30945', '1.30840', '1.30730', '1.30625', '1.30515', '1.30410', '1.30300'],
    first: 6, step: 21, bid: 209, now: '1.30439', noise: 5,
    points: [0,32,8,27,20,34,25,42,30,38,36,43,42,32,51,34,59,29,71,40,74,44,80,29,86,13,90,27,104,32,112,20,121,27,128,34,135,37,138,30,145,40,157,34,168,42,175,56,188,45,194,40,202,40,206,29,211,40,219,37,233,40,243,38,252,29,257,22,267,15,269,34,273,49,276,62,287,67,292,62,305,59,314,60,319,70,324,67,333,92,336,74,338,92,343,87,350,100,356,94,361,110,366,129,371,112,376,129,381,125,388,137,392,129,395,139,398,132,405,144,408,140,414,164,419,177,421,174,426,194,429,219,436,217,439,229,441,200,445,229,452,217,459,215,464,210,466,194,476,209,483,204,490,222,494,207]
  },
  {
    symbol: 'USDCAD', quote: '1.25961 1.25987 1.25950 1.25987',
    prices: ['1.26065', '1.25985', '1.25905', '1.25825', '1.25745', '1.25665', '1.25585', '1.25505', '1.25425', '1.25345', '1.25265', '1.25185'],
    first: 7, step: 20.9, bid: 28, now: '1.25987', noise: 5,
    points: [0,141,8,151,17,148,24,139,29,144,37,149,40,169,50,175,60,177,69,164,74,173,79,174,82,182,89,169,94,166,100,168,106,180,120,175,126,163,137,169,144,173,160,168,172,175,179,168,184,173,189,171,199,169,206,180,213,178,219,188,223,188,230,207,241,173,250,153,260,173,263,199,267,206,268,231,270,196,277,184,282,166,289,153,296,143,303,133,315,146,323,128,332,103,339,99,347,89,358,79,366,68,372,79,382,76,387,61,394,64,401,74,413,79,420,63,425,43,430,19,434,38,439,48,444,73,452,89,456,63,463,44,468,56,475,63,482,56,489,39,497,31]
  },
  {
    symbol: 'AUDUSD', quote: '0.74226 0.74229 0.74211 0.74211',
    prices: ['0.74545', '0.74505', '0.74465', '0.74425', '0.74385', '0.74345', '0.74305', '0.74265', '0.74225', '0.74185', '0.74145', '0.74105'],
    first: 3, step: 21.1, bid: 180, now: '0.74211', noise: 8,
    points: [0,56,4,39,9,26,14,46,22,59,30,46,37,56,42,31,51,34,59,29,71,48,76,43,81,29,92,41,101,34,106,23,109,26,120,43,132,54,138,26,142,33,145,48,161,43,168,53,176,83,185,76,199,69,206,63,214,91,219,71,223,79,231,68,235,86,242,96,249,106,254,89,261,76,266,43,269,46,278,59,287,88,292,69,302,69,314,46,319,69,326,76,333,116,338,103,340,109,344,86,349,106,359,109,365,129,370,96,381,109,388,139,395,116,402,123,407,149,416,163,419,183,424,206,430,223,436,199,438,209,441,176,448,189,456,209,460,209,467,176,469,186,473,173,479,163,486,194,490,191,493,173]
  }
];

// small repeatable generator so the bars look the same on each load
let seed = 7;
function rand() {
  seed = (seed * 16807) % 2147483647;
  return seed / 2147483647;
}

function barPath(points, noise) {
  let d = '';
  let drift = 0;
  for (let i = 0; i < points.length - 2; i += 2) {
    const [x1, y1, x2, y2] = points.slice(i, i + 4);
    for (let x = x1; x < x2; x++) {
      if (x % 2) drift = (rand() - 0.5) * noise * 1.4;
      const y = y1 + (y2 - y1) * (x - x1) / (x2 - x1) + drift;
      const top = y - rand() * noise / 2;
      const bottom = y + rand() * noise;
      d += `${d ? 'L' : 'M'}${x} ${top.toFixed(1)}V${bottom.toFixed(1)}`;
    }
  }
  return d;
}

function gridPath(chart) {
  let d = '';
  for (let x = 20; x < W; x += 20) d += `M${x} 0V${H}`;
  chart.prices.forEach((p, i) => d += `M0 ${Math.round(chart.first + i * chart.step)}H${W}`);
  return d;
}

function priceLabel(text, y, cls) {
  return `<span class="${cls}" style="top:${(y / H * 100).toFixed(2)}%">${text}</span>`;
}

document.getElementById('charts').innerHTML = charts.map(c => `
  <article class="chart-window">
    <div class="chart-title">
      <svg><use href="#i-windows"/></svg>${c.symbol},M1
      <div class="chart-buttons">
        <button aria-label="最小化"><svg viewBox="0 0 8 8"><path d="M1 4h6v2H1z"/></svg></button>
        <button aria-label="最大化"><svg viewBox="0 0 8 8"><path d="M1 1h6v6H1zM3 3h2v2H3z"/></svg></button>
        <button aria-label="閉じる"><svg viewBox="0 0 8 8"><path d="M1 1h2l1 1 1-1h2v2L6 4l1 1v2H5L4 6 3 7H1V5l1-1-1-1z"/></svg></button>
      </div>
    </div>
    <div class="chart">
      <div class="plot">
        <svg viewBox="0 0 ${W} ${H}" preserveAspectRatio="none" shape-rendering="crispEdges">
          <path class="grid" d="${gridPath(c)}"/>
          <line class="bid" x1="0" x2="${W}" y1="${c.bid}" y2="${c.bid}"/>
          <path class="bars" d="${barPath(c.points, c.noise)}"/>
        </svg>
        <div class="quote"><span>▼ ${c.symbol},M1&nbsp; ${c.quote}</span><span>23694114<i>☺</i></span></div>
      </div>
      <div class="prices">
        ${c.prices.map((p, i) => priceLabel(p, c.first + i * c.step, 'tick')).join('')}
        ${priceLabel(c.now, c.bid, 'now')}
      </div>
      <div class="times">${times.map(t => `<span>14 Apr ${t}</span>`).join('')}</div>
    </div>
  </article>`).join('');
```
